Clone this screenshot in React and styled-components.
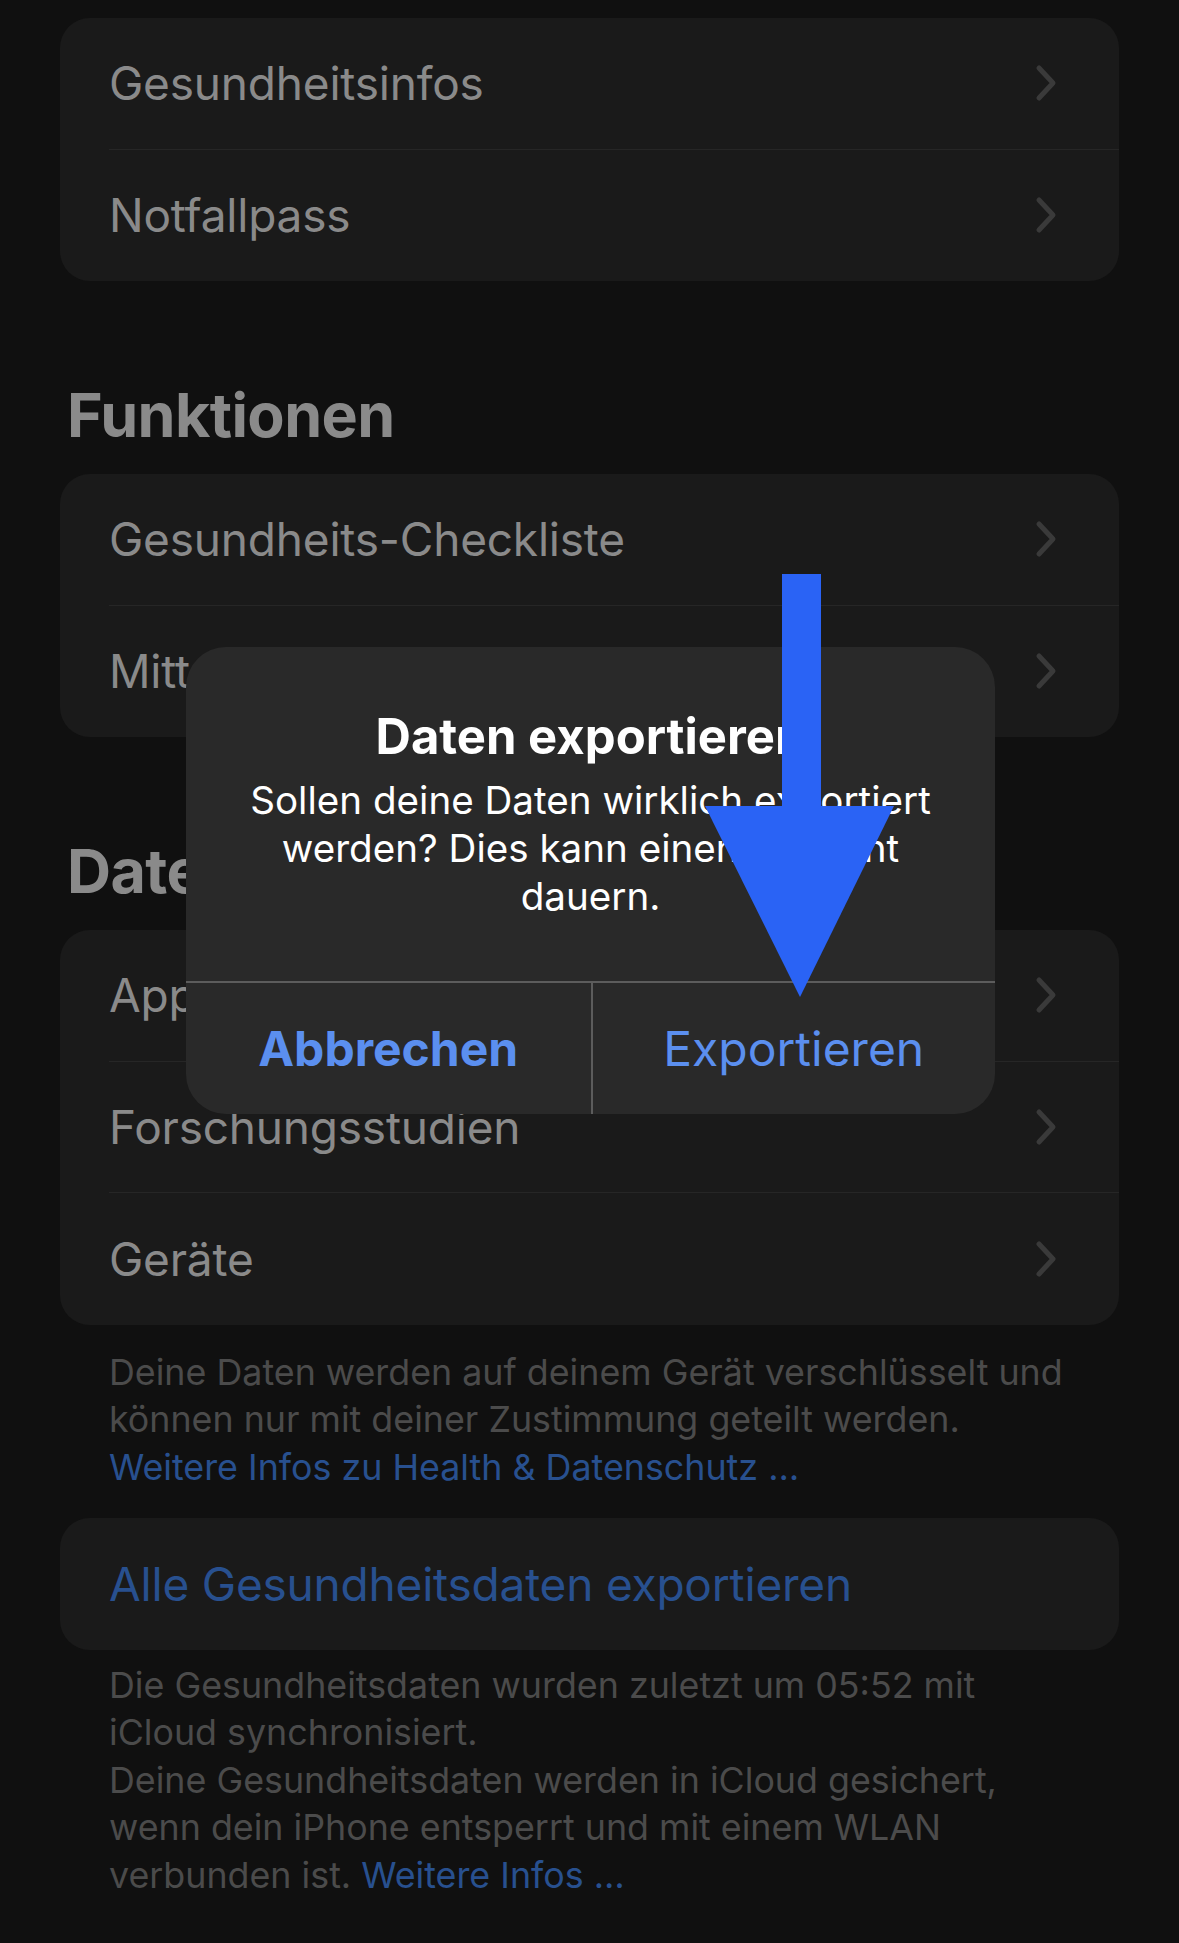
import React from 'react';
import styled, { createGlobalStyle } from 'styled-components';

const GlobalStyle = createGlobalStyle`
  body {
    margin: 0;
    background: #101010;
    font-family: Inter, "Liberation Sans", sans-serif;
    -webkit-font-smoothing: antialiased;
  }
`;

const Page = styled.div`
  position: relative;
  width: 1179px;
  height: 1943px;
  box-sizing: border-box;
  padding: 18px 60px 0;
  overflow: hidden;
  background: #101010;
`;

const Group = styled.div`
  background: #1a1a1a;
  border-radius: 30px;
  overflow: hidden;
`;

const Row = styled.div`
  height: 131.5px;
  padding-left: 49px;
  box-sizing: border-box;
  display: flex;
`;

const RowInner = styled.div`
  flex: 1;
  display: flex;
  align-items: center;
  justify-content: space-between;
  padding-right: 62px;
  border-bottom: ${(p) => (p.last ? 'none' : '1.5px solid #262626')};
`;

const RowLabel = styled.span`
  font-size: 46px;
  color: ${(p) => (p.link ? '#28508f' : '#8a8a8a')};
  letter-spacing: -0.2px;
`;

const SectionTitle = styled.h2`
  margin: 97px 0 21px 7px;
  font-size: 61px;
  line-height: 75px;
  font-weight: 700;
  color: #8a8a8a;
  letter-spacing: -0.6px;
`;

const Footer = styled.p`
  margin: ${(p) => p.margin};
  padding-left: 49px;
  font-size: 35.8px;
  line-height: 47.5px;
  color: #4b4b4b;
  white-space: nowrap;
`;

const FooterLink = styled.span`
  color: #28508f;
`;

const Alert = styled.div`
  position: absolute;
  top: 647px;
  left: 186px;
  width: 809px;
  background: #292929;
  border-radius: 40px;
  overflow: hidden;
  text-align: center;
  color: #fff;
`;

const AlertBody = styled.div`
  padding: 61px 30px 61px;
`;

const AlertTitle = styled.div`
  font-size: 49px;
  line-height: 57px;
  font-weight: 700;
  margin-bottom: 11px;
`;

const AlertMessage = styled.div`
  font-size: 38.6px;
  line-height: 48px;
`;

const AlertButtons = styled.div`
  display: grid;
  grid-template-columns: 1fr 1fr;
  border-top: 2px solid #5c5c5c;
`;

const AlertButton = styled.div`
  height: 131px;
  display: flex;
  align-items: center;
  justify-content: center;
  font-size: 48px;
  font-weight: ${(p) => (p.bold ? 700 : 400)};
  color: #5b8fef;
  & + & {
    border-left: 2px solid #5c5c5c;
  }
`;

const Overlay = styled.svg`
  position: absolute;
  top: 0;
  left: 0;
  pointer-events: none;
`;

function Chevron() {
  return (
    <svg width="22" height="38" viewBox="0 0 22 38">
      <path d="M4 4 L18 19 L4 34" fill="none" stroke="#3a3a3a" strokeWidth="5" strokeLinecap="round" strokeLinejoin="round" />
    </svg>
  );
}

function ListRow({ label, last, link, chevron = true }) {
  return (
    <Row>
      <RowInner last={last}>
        <RowLabel link={link}>{label}</RowLabel>
        {chevron && <Chevron />}
      </RowInner>
    </Row>
  );
}

export default function App() {
  return (
    <>
      <GlobalStyle />
      <Page>
        <Group>
          <ListRow label="Gesundheitsinfos" />
          <ListRow label="Notfallpass" last />
        </Group>

        <SectionTitle>Funktionen</SectionTitle>
        <Group>
          <ListRow label="Gesundheits-Checkliste" />
          <ListRow label="Mitteilungen" last />
        </Group>

        <SectionTitle>Daten</SectionTitle>
        <Group>
          <ListRow label="Apps und Dienste" />
          <ListRow label="Forschungsstudien" />
          <ListRow label="Geräte" last />
        </Group>
        <Footer margin="24px 0 27px">
          Deine Daten werden auf deinem Gerät verschlüsselt und<br />
          können nur mit deiner Zustimmung geteilt werden.<br />
          <FooterLink>Weitere Infos zu Health &amp; Datenschutz …</FooterLink>
        </Footer>

        <Group>
          <ListRow label="Alle Gesundheitsdaten exportieren" link last chevron={false} />
        </Group>
        <Footer margin="12px 0 0">
          Die Gesundheitsdaten wurden zuletzt um 05:52 mit<br />
          iCloud synchronisiert.<br />
          Deine Gesundheitsdaten werden in iCloud gesichert,<br />
          wenn dein iPhone entsperrt und mit einem WLAN<br />
          verbunden ist. <FooterLink>Weitere Infos …</FooterLink>
        </Footer>

        <Alert>
          <AlertBody>
            <AlertTitle>Daten exportieren</AlertTitle>
            <AlertMessage>
              Sollen deine Daten wirklich exportiert<br />
              werden? Dies kann einen Moment<br />
              dauern.
            </AlertMessage>
          </AlertBody>
          <AlertButtons>
            <AlertButton bold>Abbrechen</AlertButton>
            <AlertButton>Exportieren</AlertButton>
          </AlertButtons>
        </Alert>

        <Overlay width="1179" height="1943" viewBox="0 0 1179 1943">
          <rect x="782" y="574" width="39" height="234" fill="#2a63f5" />
          <polygon points="705,806 894,806 800,997" fill="#2a63f5" />
        </Overlay>
      </Page>
    </>
  );
}
